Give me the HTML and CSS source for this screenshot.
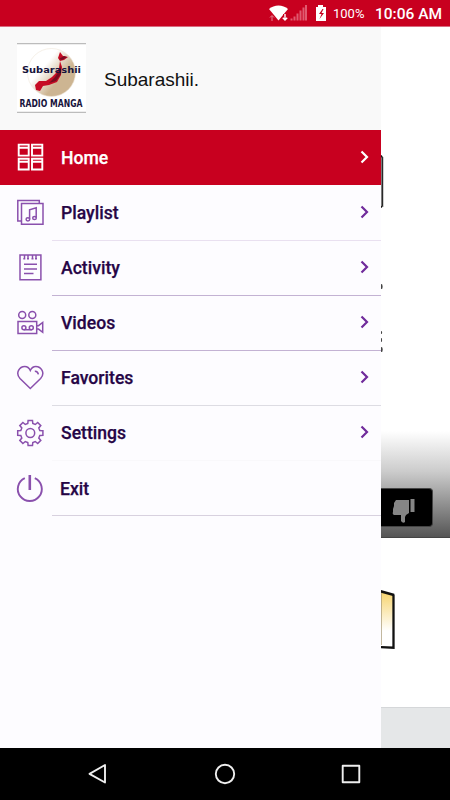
FILE: index.html
```html
<!DOCTYPE html>
<html lang="en">
<head>
<meta charset="utf-8">
<title>Subarashii.</title>
<link rel="stylesheet" href="styles.css">
</head>
<body>
<header class="status">
  <svg class="signal" width="60" height="26" viewBox="0 0 60 26">
    <path d="M0 9C5 4.300 14 4.300 19 9L9.500 20.500Z" fill="#fff"/>
    <path d="M3 21v-5M1 17.500l2-2 2 2" stroke="#e5808f" fill="none"/>
    <path d="M16 14v6M13.500 17.500l2.500 2.500 2.500-2.500" stroke="#c8001f" stroke-width="4" fill="none"/>
    <path d="M16 14v6M13.800 17.700l2.200 2.300 2.200-2.300" stroke="#fff" stroke-width="1.400" fill="none"/>
    <path d="M22.500 20.500v-2M25.500 20.500v-4M28.500 20.500v-7M31.500 20.500v-10M34.500 20.500v-13M37 20.500V5" stroke="#e05a70" stroke-width="2"/>
    <path d="M47 7h2V5h5v2h3v14H47Z" fill="#fff"/>
    <path d="M53.500 9l-3.500 5h2.500l-2 5 4.500-6h-2.500l2-4Z" fill="#c8001f"/>
  </svg>
  <span class="percent">100%</span>
  <span class="clock">10:06 AM</span>
</header>
<main class="screen">
  <aside class="drawer">
    <div class="brand">
      <svg class="logo" width="69" height="70" viewBox="0 0 69 70">
        <defs>
          <linearGradient id="sun" x1="0.15" y1="0.2" x2="0.8" y2="0.75">
            <stop offset="0.3" stop-color="#fff"/><stop offset="0.8" stop-color="#cdb592"/>
          </linearGradient>
        </defs>
        <path d="M0 0h69v70H0Z" fill="#fff"/>
        <path d="M0 .7h69M0 69.300h69" stroke="#bcbcbc" stroke-width="1.300"/>
        <circle cx="34.500" cy="29.500" r="24" fill="url(#sun)" stroke="#eee5d8" stroke-width=".6"/>
        <path d="M43 9l3 4 5 1-4 3-4 1-2-3ZM43 18l2 6-1 8-4 7-8 3-6 1-3 5-4-1-1-5 4-4 7 0 6-4 4-4 3-5Z" fill="#c60c24"/>
        <path d="M44 22l0 9-5 7-7 2 6-6 4-6ZM42 16l5-3 3 1-5 3Z" fill="#780c20"/>
        <text x="5" y="30" class="logo-name" textLength="59" lengthAdjust="spacingAndGlyphs">Subarashii</text>
        <text x="2.500" y="63.500" class="logo-sub" textLength="63" lengthAdjust="spacingAndGlyphs">RADIO MANGA</text>
      </svg>
      <h1 class="title">Subarashii.</h1>
    </div>
    <nav class="menu">
      <a class="item active">
        <svg class="icon" viewBox="0 0 30 30"><path d="M3.700 2.600h10v11h-10ZM17 2.600h10.300v11H17ZM3.700 16.700h10v10.800h-10ZM17 16.700h10.300v10.800H17ZM3.700 5.800h10M17 5.800h10.300M3.700 19.800h10M17 19.800h10.300"/></svg>
        <span class="label">Home</span>
        <svg class="chevron" viewBox="0 0 10 14"><path d="M1.500 1.500 7 7l-5.500 5.500"/></svg>
      </a>
      <a class="item">
        <svg class="icon" viewBox="0 0 30 30"><path d="M6 24H2.800V3.400h21.500v2.800M6.500 6.600H28v20.600H6.500ZM14.600 22.300v-9.500l6.600-2v10"/><ellipse cx="12.900" cy="22.300" rx="1.800" ry="1.600"/><ellipse cx="19.500" cy="21" rx="1.800" ry="1.600"/></svg>
        <span class="label">Playlist</span>
        <svg class="chevron" viewBox="0 0 10 14"><path d="M1.500 1.500 7 7l-5.500 5.500"/></svg>
      </a>
      <a class="item line-pale">
        <svg class="icon" viewBox="0 0 30 30"><path d="M5 3h20.900v24.800H5ZM9 12.200h13M9 17h13M9 21.500h9.500M9.500 3v4M13 3v4M17.500 3v4M21 3v4M8.300 6.800h2M12 6.800h2M16.500 6.800h2M20 6.800h2"/></svg>
        <span class="label">Activity</span>
        <svg class="chevron" viewBox="0 0 10 14"><path d="M1.500 1.500 7 7l-5.500 5.500"/></svg>
      </a>
      <a class="item line-strong">
        <svg class="icon" viewBox="0 0 30 30"><circle cx="7.200" cy="8" r="3.500"/><circle cx="17.300" cy="8" r="3.500"/><path d="M3 14.400h18.700v12H3ZM21.700 18.700h1.800l4.200-3.200v9.800l-4.200-3.200h-1.800M8.800 22.800h8"/><circle cx="8.900" cy="20.800" r="2"/><circle cx="16.300" cy="20.800" r="2"/></svg>
        <span class="label">Videos</span>
        <svg class="chevron" viewBox="0 0 10 14"><path d="M1.500 1.500 7 7l-5.500 5.500"/></svg>
      </a>
      <a class="item line-strong">
        <svg class="icon" viewBox="0 0 30 30"><path d="M15.300 26.500 5 16.500C0 11 4.500 4.500 9.800 4.500Q13.500 4.500 15.300 8.500 17.100 4.500 20.800 4.500C26.100 4.500 30.600 11 25.600 16.500ZM19.800 9.200q3-.2 3.600 3.200"/></svg>
        <span class="label">Favorites</span>
        <svg class="chevron" viewBox="0 0 10 14"><path d="M1.500 1.500 7 7l-5.500 5.500"/></svg>
      </a>
      <a class="item line-gray">
        <svg class="icon" viewBox="0 0 30 30"><circle cx="15.300" cy="16" r="4.400"/><path d="M12.800 6.500l.3-3.100h4.400l.3 3.100 2.500 1 2.400-2 3.100 3.100-2 2.400 1 2.500 3.100.3v4.400l-3.100.3-1 2.500 2 2.400-3.100 3.100-2.400-2-2.500 1-.3 3.100h-4.400l-.3-3.100-2.500-1-2.400 2-3.100-3.100 2-2.400-1-2.500-3.100-.3v-4.400l3.100-.3 1-2.500-2-2.400 3.100-3.100 2.400 2Z"/></svg>
        <span class="label">Settings</span>
        <svg class="chevron" viewBox="0 0 10 14"><path d="M1.500 1.500 7 7l-5.500 5.500"/></svg>
      </a>
      <a class="item exit line-faint">
        <svg class="icon" viewBox="0 0 30 30"><path d="M9.800 6.100a12 12 0 1 0 10 0" stroke-width="1.900"/><path d="M14.800 3v15" stroke-width="2.600"/></svg>
        <span class="label">Exit</span>
      </a>
      <div class="end"></div>
    </nav>
  </aside>
  <section class="page">
    <div class="cover">
      <svg width="69" height="404" viewBox="0 0 69 404">
        <path d="M0 128.500l1.200 2V179L0 180.500" fill="none" stroke="#111" stroke-width="1.500"/>
        <path d="M2.400 130v50" stroke="#bbb" stroke-width=".8"/>
        <g fill="#444"><ellipse cx=".6" cy="259.500" rx="1" ry="2.500"/><ellipse cx=".3" cy="305.500" rx=".8" ry="1.500"/><ellipse cx=".3" cy="313" rx=".8" ry="2"/><ellipse cx=".6" cy="322.500" rx="1.100" ry="2.600"/></g>
      </svg>
      <div class="shade">
        <div class="vote">
          <svg width="24" height="25" viewBox="0 0 24 25" fill="#858585"><path d="M4 1h13v13l-3 2-1 2v5q-2 2-4-1v-6H2q-2-1-1-3l0-3 1-3 0-3Z"/><path d="M18.500 0h4v13h-4Z"/></svg>
        </div>
      </div>
    </div>
    <div class="art">
      <svg width="69" height="70" viewBox="0 0 69 70">
        <defs><linearGradient id="glow" x1="0" y1="0" x2="0" y2="1"><stop stop-color="#f6d36c"/><stop offset=".7" stop-color="#fff"/></linearGradient></defs>
        <path d="M-1 4.500 12.500 8v53H-1Z" fill="url(#glow)"/>
        <path d="M-1 4 13 8" fill="none" stroke="#111" stroke-width="2.600"/>
        <path d="M12.500 7.500v53.200L-1 60" fill="none" stroke="#111" stroke-width="2.300"/>
        <path d="M.4 6v52" stroke="#aa9b78" stroke-width=".8"/>
      </svg>
    </div>
    <div class="footer"></div>
  </section>
</main>
<footer class="navbar">
  <svg width="22" height="24" viewBox="0 0 22 24"><path d="M18 3v17.500L2.500 11.800Z"/></svg>
  <svg width="22" height="24" viewBox="0 0 22 24"><circle cx="11" cy="12" r="9.200"/></svg>
  <svg width="22" height="24" viewBox="0 0 22 24"><path d="M2.700 3.700h16.600v16.600H2.700Z"/></svg>
</footer>
</body>
</html>
```
FILE: styles.css
```css
* { box-sizing: border-box; }
body {
  margin: 0;
  width: 450px;
  height: 800px;
  overflow: hidden;
  display: flex;
  flex-direction: column;
  background: #fff;
  font-family: Roboto, sans-serif;
}
svg { display: block; flex: none; }

.status {
  height: 27px;
  flex: none;
  display: flex;
  align-items: center;
  padding-left: 269px;
  background: #c8001f;
  border-bottom: 1px solid #d96b80;
  color: #fff;
  white-space: nowrap;
}
.percent { margin-left: 4px; width: 33px; padding-top: 1px; font-size: 13px; }
.clock { margin-left: 9px; padding-top: 1px; font-size: 15.5px; font-weight: 500; }

.screen { display: flex; height: 721px; flex: none; }
.drawer { width: 381px; flex: none; background: #fdfcff; }
.brand {
  height: 103px;
  display: flex;
  align-items: flex-start;
  padding: 16px 0 0 17px;
  background: #f9f9f9;
}
.title {
  margin: 25px 0 0 18px;
  font: 400 19px/24px "Liberation Sans", sans-serif;
  color: #111;
}
.logo-name { font: 700 9px "DejaVu Sans", sans-serif; fill: #17133c; }
.logo-sub { font: 700 10px "DejaVu Sans Condensed", "DejaVu Sans", sans-serif; fill: #17133c; }

.item {
  height: 55px;
  display: flex;
  align-items: center;
  padding: 0 11px 0 15px;
  color: #260546;
  background-repeat: no-repeat;
  background-position: 52px 0;
  background-size: 329px 1px;
}
.active { background: #c8001f; color: #fff; }
.icon {
  width: 30px;
  height: 30px;
  margin-top: -1px;
  fill: none;
  stroke: #8a50ad;
  stroke-width: 1.5;
}
.active .icon { stroke-width: 1.9; }
.label { margin-left: 16px; padding-top: 1px; flex: 1; font-size: 17.6px; font-weight: 500; -webkit-text-stroke: 0.25px; }
.exit .label { margin-left: 15px; padding-top: 2px; }
.chevron {
  width: 10px;
  height: 14px;
  margin-top: -1px;
  fill: none;
  stroke: #702b9b;
  stroke-width: 2.2;
}
.active .icon, .active .chevron { stroke: #fff; }
.line-pale { background-image: linear-gradient(#e9e0f0, #e9e0f0); }
.line-strong { background-image: linear-gradient(#c3b2d3, #c3b2d3); }
.line-gray { background-image: linear-gradient(#dddce3, #dddce3); }
.line-faint { background-image: linear-gradient(#f9f8fb, #f9f8fb); }
.end { height: 1px; margin-left: 52px; background: #d8d1df; }

.page { flex: 1; display: flex; flex-direction: column; }
.cover { height: 511px; flex: none; }
.shade {
  height: 107px;
  padding-top: 57px;
  background: linear-gradient(#fff, #ccc 38%, #555);
  border-bottom: 1px solid #444;
}
.vote {
  width: 52px;
  height: 39px;
  padding: 10px 0 0 11px;
  background: #000;
  border: 1px solid #444;
  border-left: 0;
  border-radius: 0 4px 4px 0;
}
.art { height: 169px; flex: none; padding-top: 49px; }
.footer { flex: 1; background: #e5e7e8; border-top: 1px solid #d5d7d9; }

.navbar {
  height: 52px;
  flex: none;
  display: flex;
  justify-content: space-between;
  align-items: center;
  padding: 0 88px 0 87px;
  background: #000;
}
.navbar svg { fill: none; stroke: #eee; stroke-width: 1.9; stroke-linejoin: round; }
```
